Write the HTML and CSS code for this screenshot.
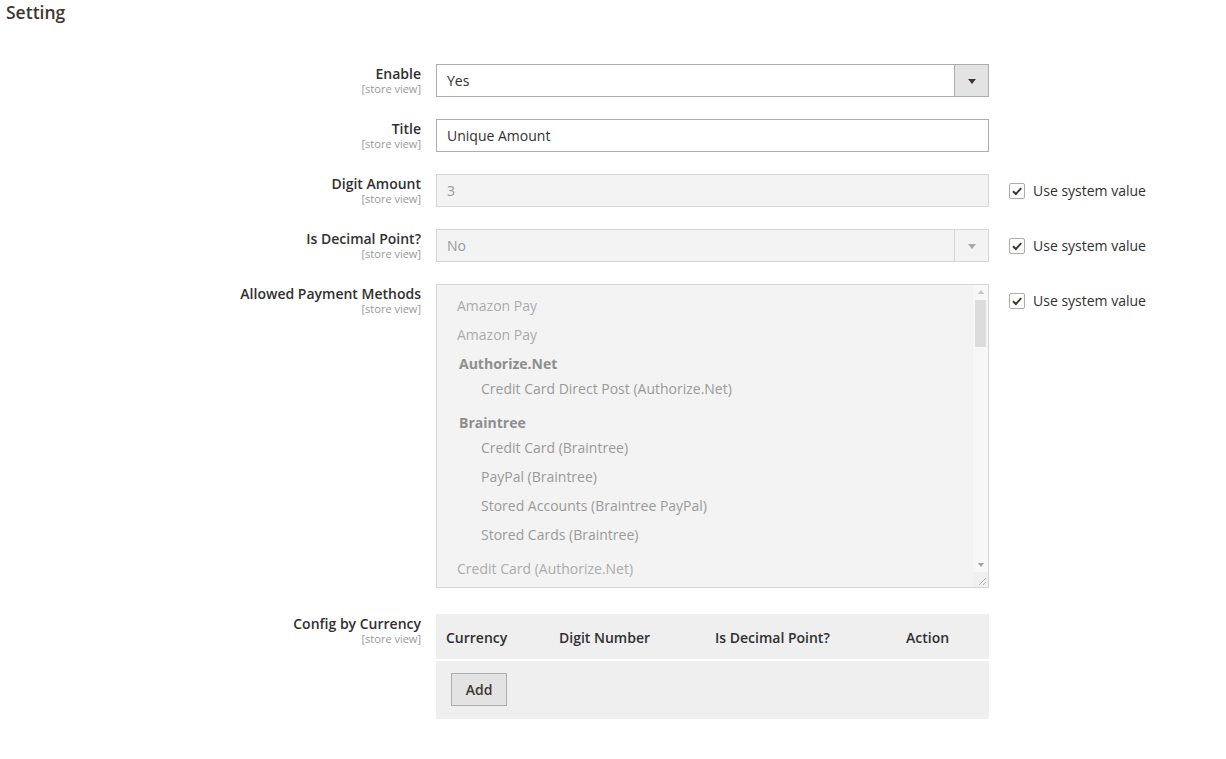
FILE: index.html
```html
<!DOCTYPE html>
<html lang="en">
<head>
<meta charset="utf-8">
<title>Setting</title>
<link rel="stylesheet" href="styles.css">
</head>
<body>
<div class="page">
  <h1 class="section-title">Setting</h1>
  <div class="form">
    <div class="row">
      <div class="label"><span class="name">Enable</span><span class="scope">[store view]</span></div>
      <div class="control">
        <div class="select">
          <span class="value">Yes</span>
          <span class="arrow"><span class="tri"></span></span>
        </div>
      </div>
      <div class="extra"></div>
    </div>

    <div class="row">
      <div class="label"><span class="name">Title</span><span class="scope">[store view]</span></div>
      <div class="control">
        <div class="input"><span class="value">Unique Amount</span></div>
      </div>
      <div class="extra"></div>
    </div>

    <div class="row">
      <div class="label"><span class="name">Digit Amount</span><span class="scope">[store view]</span></div>
      <div class="control">
        <div class="input disabled"><span class="value">3</span></div>
      </div>
      <div class="extra">
        <label class="sysval"><span class="check"><svg viewBox="0 0 16 16" width="16" height="16"><path d="M4 8.2 L6.9 11 L12.2 5.2" fill="none" stroke="#41362f" stroke-width="2"/></svg></span>Use system value</label>
      </div>
    </div>

    <div class="row">
      <div class="label"><span class="name">Is Decimal Point?</span><span class="scope">[store view]</span></div>
      <div class="control">
        <div class="select disabled">
          <span class="value">No</span>
          <span class="arrow"><span class="tri"></span></span>
        </div>
      </div>
      <div class="extra">
        <label class="sysval"><span class="check"><svg viewBox="0 0 16 16" width="16" height="16"><path d="M4 8.2 L6.9 11 L12.2 5.2" fill="none" stroke="#41362f" stroke-width="2"/></svg></span>Use system value</label>
      </div>
    </div>

    <div class="row">
      <div class="label"><span class="name">Allowed Payment Methods</span><span class="scope">[store view]</span></div>
      <div class="control">
        <div class="multiselect">
          <div class="options">
            <div class="opt">Amazon Pay</div>
            <div class="opt">Amazon Pay</div>
            <div class="group">
              <div class="group-label">Authorize.Net</div>
              <div class="sub">Credit Card Direct Post (Authorize.Net)</div>
            </div>
            <div class="group">
              <div class="group-label">Braintree</div>
              <div class="sub">Credit Card (Braintree)</div>
              <div class="sub">PayPal (Braintree)</div>
              <div class="sub">Stored Accounts (Braintree PayPal)</div>
              <div class="sub">Stored Cards (Braintree)</div>
            </div>
            <div class="opt last">Credit Card (Authorize.Net)</div>
          </div>
          <div class="scrollbar">
            <span class="sb-up"></span>
            <span class="sb-thumb"></span>
            <span class="sb-fill"></span>
            <span class="sb-down"></span>
            <span class="sb-grip"><svg viewBox="0 0 15 15" width="15" height="15"><path d="M13 6 L6 13 M13 10 L10 13" stroke="#b5b5b5" stroke-width="1"/></svg></span>
          </div>
        </div>
      </div>
      <div class="extra">
        <label class="sysval"><span class="check"><svg viewBox="0 0 16 16" width="16" height="16"><path d="M4 8.2 L6.9 11 L12.2 5.2" fill="none" stroke="#41362f" stroke-width="2"/></svg></span>Use system value</label>
      </div>
    </div>

    <div class="row row-table">
      <div class="label"><span class="name">Config by Currency</span><span class="scope">[store view]</span></div>
      <div class="control">
        <div class="grid-table">
          <div class="thead">
            <span class="th c1">Currency</span>
            <span class="th c2">Digit Number</span>
            <span class="th c3">Is Decimal Point?</span>
            <span class="th c4">Action</span>
          </div>
          <div class="tfoot">
            <button class="btn-add" type="button">Add</button>
          </div>
        </div>
      </div>
      <div class="extra"></div>
    </div>
  </div>
</div>
</body>
</html>
```

FILE: styles.css
```css
* { box-sizing: border-box; }
html, body { margin: 0; padding: 0; background: #fff; }
body {
  font-family: "Open Sans", "Liberation Sans", sans-serif;
  color: #303030;
  font-size: 14px;
}
.page { padding: 0; }
.section-title {
  margin: 0;
  padding: 2px 0 0 6px;
  font-size: 17.5px;
  line-height: 20px;
  font-weight: 600;
  color: #41362f;
}
.form { padding-top: 42px; }
.row {
  display: grid;
  grid-template-columns: 421px 553px auto;
  column-gap: 15px;
  margin-bottom: 22px;
}
.row > .extra { margin-left: 5px; padding-top: 8px; }
.label {
  display: flex;
  flex-direction: column;
  align-items: flex-end;
  text-align: right;
  padding-top: 0;
}
.label .name {
  font-weight: 600;
  font-size: 14px;
  line-height: 19px;
  color: #303030;
}
.label .scope {
  font-size: 11px;
  line-height: 12px;
  color: #999;
  margin-top: 0;
}
.input, .select {
  height: 33px;
  border: 1px solid #adadad;
  background: #fff;
  display: flex;
  align-items: center;
  font-size: 14px;
  color: #303030;
}
.input .value, .select .value { padding-left: 10px; flex: 1; }
.select .arrow {
  width: 34px;
  height: 100%;
  background: #e3e3e3;
  border-left: 1px solid #adadad;
  display: flex;
  align-items: center;
  justify-content: center;
}
.tri {
  width: 0; height: 0;
  border-left: 4px solid transparent;
  border-right: 4px solid transparent;
  border-top: 5px solid #41362f;
  margin-top: 1px;
}
.disabled { background: #f3f3f3; border-color: #d6d6d6; color: #9a9a9a; }
.select.disabled .arrow { background: #f3f3f3; border-left-color: #d6d6d6; }
.select.disabled .tri { border-top-color: #a8a8a8; }
.sysval {
  display: flex;
  align-items: center;
  font-size: 14px;
  line-height: 18px;
  color: #303030;
}
.check {
  width: 16px; height: 16px;
  border: 1px solid #adadad;
  border-radius: 2px;
  background: #fff;
  margin-right: 8px;
  display: flex;
  align-items: center;
  justify-content: center;
}
.check svg { display: block; margin: -1px; }
.multiselect {
  height: 304px;
  border: 1px solid #d6d6d6;
  background: #f3f3f3;
  display: flex;
  overflow: hidden;
}
.options {
  flex: 1;
  padding: 11px 0 0 20px;
  overflow: hidden;
}
.opt {
  line-height: 19px;
  margin-bottom: 10px;
  color: #ababab;
}
.group { margin-bottom: 15px; }
.group-label {
  font-weight: 700;
  color: #8e8e8e;
  line-height: 19px;
  padding-left: 2px;
  margin-bottom: 6px;
}
.sub {
  padding-left: 24px;
  color: #9a9a9a;
  line-height: 19px;
  margin-bottom: 10px;
}
.group .sub:last-child { margin-bottom: 0; }
.scrollbar {
  width: 15px;
  background: #f7f7f7;
  display: flex;
  flex-direction: column;
  align-items: center;
}
.sb-up, .sb-down { height: 14px; display: flex; width: 100%; justify-content: center; align-items: center; }
.sb-up::before {
  content: ""; width: 0; height: 0;
  border-left: 3.5px solid transparent; border-right: 3.5px solid transparent;
  border-bottom: 4px solid #c4c4c4;
}
.sb-down::before {
  content: ""; width: 0; height: 0;
  border-left: 3.5px solid transparent; border-right: 3.5px solid transparent;
  border-top: 4px solid #9e9e9e;
}
.sb-thumb { width: 11px; height: 47px; background: #dcdcdc; margin-top: 1px; }
.sb-fill { flex: 1; }
.sb-grip { width: 15px; height: 15px; background: #f0f0f0; display: block; }
.sb-grip svg { display: block; }
.row-table { margin-top: 26px; }
.grid-table { background: #efefef; }
.thead {
  display: flex;
  height: 45px;
  align-items: center;
  border-bottom: 2px solid #fff;
  box-sizing: content-box;
}
.th {
  flex: none;
  font-weight: 600;
  font-size: 14px;
  color: #303030;
  padding-left: 10px;
  padding-top: 1px;
}
.c1 { width: 113px; }
.c2 { width: 156px; }
.c3 { width: 191px; }
.c4 { width: 93px; }
.tfoot { height: 58px; padding: 12px 0 0 15px; }
.btn-add {
  width: 56px;
  height: 33px;
  background: #e3e3e3;
  border: 1px solid #adadad;
  font-family: "Open Sans", "Liberation Sans", sans-serif;
  font-size: 14px;
  font-weight: 600;
  color: #41362f;
  padding: 0;
  cursor: pointer;
}
```
